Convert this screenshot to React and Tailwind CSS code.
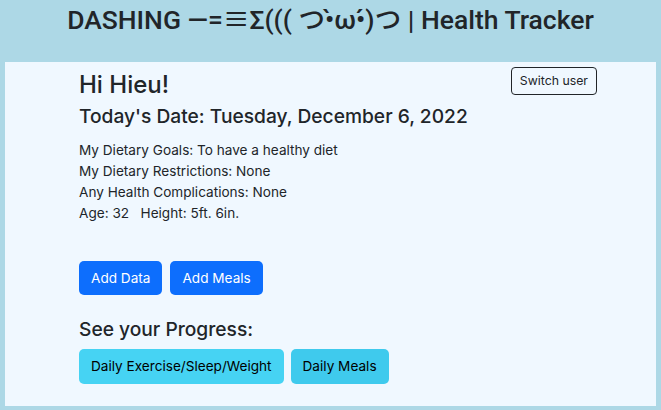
export default function App() {
    return (
        <div className="min-h-[410px] bg-[#add8e6] px-[5px] pb-[5px] text-[#212529]" style={{ fontFamily: 'Inter, "Noto Sans", "Noto Sans CJK JP", sans-serif' }}>
            <h1 className="h-[62px] pt-[2px] text-center text-[26.5px] leading-[36px] font-medium" style={{ fontFamily: 'Roboto, "Noto Sans CJK JP", sans-serif' }}>
                DASHING —=≡Σ((( つ•̀ω•́)つ | Health Tracker
            </h1>
            <div className="bg-[#f0f8ff] pl-[74px] pr-[59px] pt-[5px] pb-[22px]">
                <div className="flex items-start justify-between">
                    <h2 className="mt-[3px] text-[24px] leading-[30px] font-medium">Hi Hieu!</h2>
                    <button className="h-[28px] rounded-[4px] border border-[#212529] px-[8px] text-[12.3px]">Switch user</button>
                </div>
                <h3 className="mt-[4px] text-[19.2px] leading-[24px] font-medium">Today's Date: Tuesday, December 6, 2022</h3>
                <div className="mt-[12px] text-[13.6px] leading-[21px]">
                    <p>My Dietary Goals: To have a healthy diet</p>
                    <p>My Dietary Restrictions: None</p>
                    <p>Any Health Complications: None</p>
                    <p>Age: 32 &nbsp; Height: 5ft. 6in.</p>
                </div>
                <div className="mt-[37px] flex gap-[8px]">
                    <button className="h-[34px] rounded-[5px] bg-[#0d6efd] px-[12px] text-[13.6px] text-white">Add Data</button>
                    <button className="h-[34px] rounded-[5px] bg-[#0d6efd] px-[12px] text-[13.6px] text-white">Add Meals</button>
                </div>
                <h3 className="mt-[22px] text-[19.2px] leading-[24px] font-medium">See your Progress:</h3>
                <div className="mt-[8px] flex gap-[7px]">
                    <button className="h-[35px] rounded-[5px] bg-[#46d3f3] px-[12px] text-[13.6px] text-black">Daily Exercise/Sleep/Weight</button>
                    <button className="h-[35px] rounded-[5px] bg-[#3fcaed] px-[12px] text-[13.6px] text-black">Daily Meals</button>
                </div>
            </div>
        </div>
    )
}
